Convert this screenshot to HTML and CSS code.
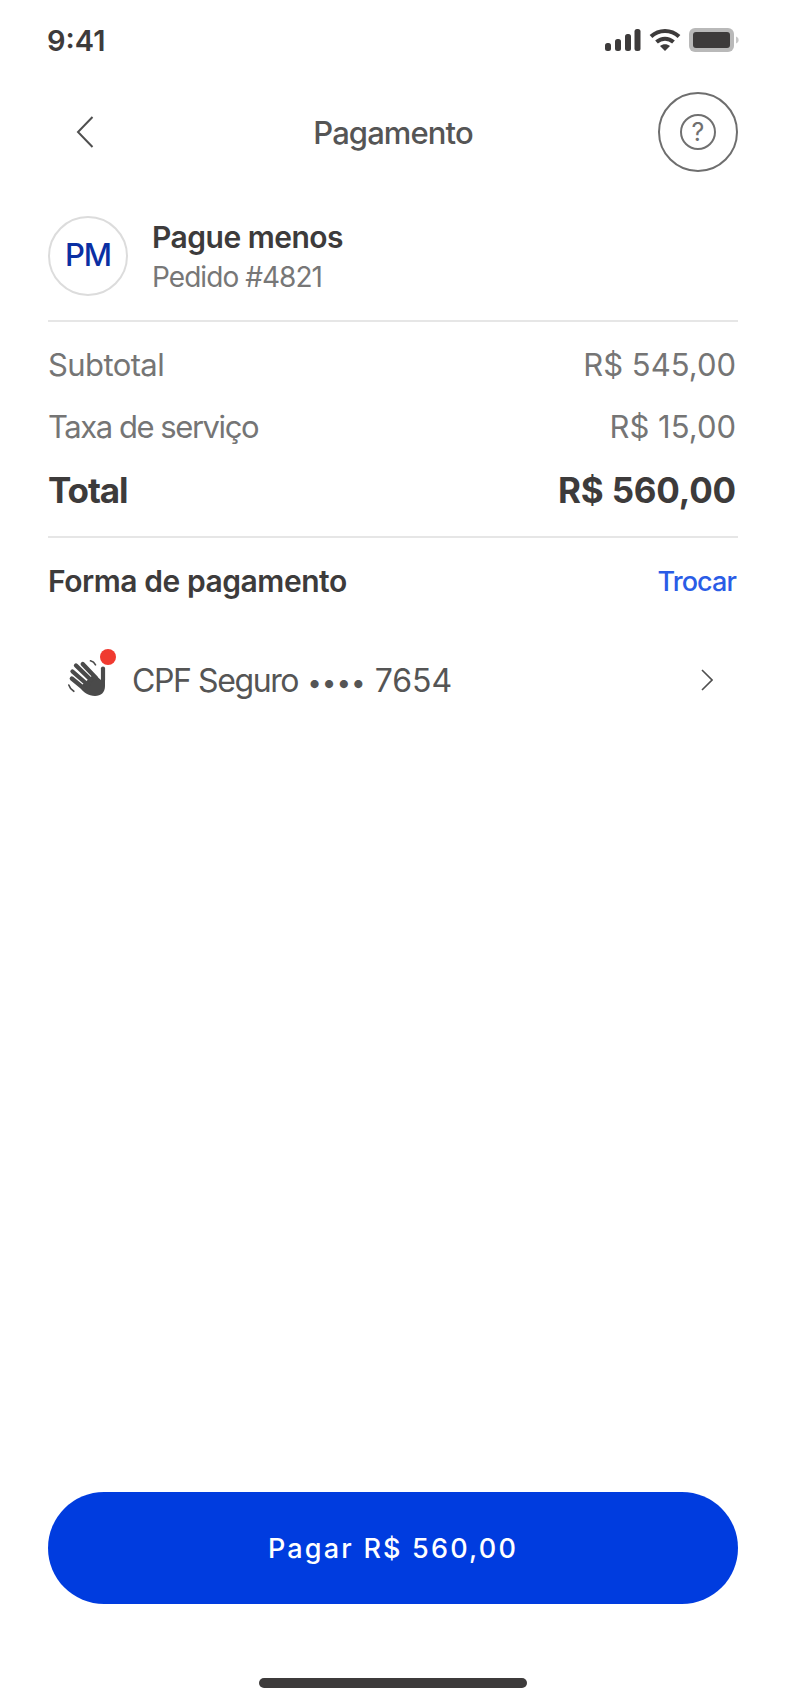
FILE: index.html
```html
<!DOCTYPE html>
<html lang="pt-BR">
  <head>
    <meta charset="UTF-8" />
    <title>Pagamento</title>
    <link rel="stylesheet" href="styles.css">
  </head>
  <body>
    <div class="screen">
      <div class="status-bar">
        <span class="clock">9:41</span>
        <div class="status-icons">
          <svg width="36" height="22" viewBox="0 0 36 22" fill="#3d3b3b">
            <rect x="0" y="14" width="6" height="8" rx="2.5" />
            <rect x="10" y="10" width="6" height="12" rx="2.5" />
            <rect x="20" y="5" width="6" height="17" rx="2.5" />
            <rect x="29.500" y="0" width="6" height="22" rx="2.500" />
          </svg>
          <svg width="32" height="24" viewBox="0 0 32 24" fill="none" stroke="#3d3b3b" stroke-width="4">
            <path d="M2 8.500C10 1 22 1 30 8.500" />
            <path d="M7.500 14C12.500 9.500 19.500 9.500 24.500 14" />
            <path d="M16 23l-5-5c3-2.200 7-2.200 10 0z" fill="#3d3b3b" stroke="none" />
          </svg>
          <svg width="50" height="24" viewBox="0 0 50 24">
            <rect x="0" y="0" width="45" height="24" rx="6" fill="#b9b9b9" />
            <rect x="4" y="4" width="37" height="16" rx="3" fill="#3d3b3b" />
            <path d="M47 8.500c2 .8 2.600 2 2.600 3.500s-.6 2.700-2.600 3.500z" fill="#c9c9c9" />
          </svg>
        </div>
      </div>

      <header class="nav">
        <button class="back" aria-label="Voltar">
          <svg width="18" height="32" viewBox="0 0 18 32" fill="none" stroke="#4f4f4f" stroke-width="2">
            <path d="M16.500 1L2 16l14.500 15" />
          </svg>
        </button>
        <h1 class="nav-title">Pagamento</h1>
        <button class="help" aria-label="Ajuda">
          <span class="help-inner">?</span>
        </button>
      </header>

      <section class="merchant">
        <div class="avatar">PM</div>
        <div class="merchant-text">
          <div class="merchant-name">Pague menos</div>
          <div class="merchant-order">Pedido #4821</div>
        </div>
      </section>

      <section class="summary">
        <div class="row"><span class="label-subtotal">Subtotal</span><span>R$ 545,00</span></div>
        <div class="row"><span class="label-fee">Taxa de serviço</span><span>R$ 15,00</span></div>
        <div class="row total"><span class="label-total">Total</span><span>R$ 560,00</span></div>
      </section>

      <section class="method">
        <div class="method-head">
          <h2>Forma de pagamento</h2>
          <a class="swap">Trocar</a>
        </div>
        <div class="method-row">
          <div class="method-icon">
            <svg width="40" height="40" viewBox="0 0 40 40" fill="none" stroke="#4a4a4a">
              <path d="M12 27L26 14l7 6V12h4v14c0 6.500-4 10-10 10-6.500 0-12-3.500-15-9z" fill="#4a4a4a" stroke="none" />
              <path d="M35 8.500V20" stroke-width="4.200" stroke-linecap="round" />
              <g stroke-width="4.300" stroke-linecap="round">
                <path d="M14.700 4L28 18" />
                <path d="M8 5.500L23 20" />
                <path d="M4.500 11.500L20 25" />
                <path d="M3.800 18.500L16 28.500" />
              </g>
              <g stroke-width="1.600" stroke-linecap="round">
                <path d="M.8 25c.8 2.600 2.500 4.800 5 6.300" />
                <path d="M22.500 .8c2.300.6 4 2 5 4" />
              </g>
            </svg>
            <span class="dot"></span>
          </div>
          <span class="method-label"><span class="method-name">CPF Seguro</span> <span class="method-bullets">••••</span> 7654</span>
          <svg class="method-chevron" width="12" height="22" viewBox="0 0 12 22" fill="none" stroke="#4f4f4f" stroke-width="1.600">
            <path d="M1 1l10 10L1 21" />
          </svg>
        </div>
      </section>

      <button class="pay">Pagar R$ 560,00</button>
      <div class="home-bar"></div>
    </div>
  </body>
</html>
```

FILE: styles.css
```css
* {
  box-sizing: border-box;
}
body {
  margin: 0;
  background: #fff;
  font-family: Inter, 'Noto Sans', sans-serif;
}
button {
  font-family: inherit;
  border: none;
  background: none;
  padding: 0;
}
h1, h2 {
  margin: 0;
}
.screen {
  width: 786px;
  height: 1704px;
  padding: 0 48px 16px 48px;
  display: flex;
  flex-direction: column;
  overflow: hidden;
}
.status-bar {
  height: 40px;
  margin-top: 20px;
  margin-right: -1px;
  display: flex;
  align-items: center;
  justify-content: space-between;
}
.clock {
  font-size: 29px;
  font-weight: 600;
  color: #3d3b3b;
  margin-left: -1px;
}
.status-icons {
  display: flex;
  align-items: center;
  gap: 8px;
}
.nav {
  margin-top: 32px;
  height: 80px;
  display: grid;
  grid-template-columns: 1fr auto 1fr;
  align-items: center;
}
.back {
  margin-left: 28px;
  display: flex;
}
.nav-title {
  padding-top: 1px;
  font-size: 31px;
  font-weight: 500;
  letter-spacing: -0.9px;
  color: #555;
}
.help {
  width: 80px;
  height: 80px;
  justify-self: end;
  border: 2px solid #6e6e6e;
  border-radius: 50%;
  display: flex;
  align-items: center;
  justify-content: center;
}
.help-inner {
  width: 36px;
  height: 36px;
  border: 2px solid #707070;
  border-radius: 50%;
  font-size: 25px;
  font-weight: 400;
  line-height: 32px;
  color: #707070;
  text-align: center;
}
.merchant {
  margin-top: 44px;
  padding-bottom: 24px;
  border-bottom: 2px solid #e6e6e6;
  display: flex;
  align-items: center;
  gap: 24px;
}
.avatar {
  width: 80px;
  height: 80px;
  padding-bottom: 3px;
  border: 2px solid #dcdcdc;
  border-radius: 50%;
  display: flex;
  align-items: center;
  justify-content: center;
  font-size: 31px;
  font-weight: 500;
  letter-spacing: -1px;
  color: #0a2fa3;
}
.merchant-text {
  margin: 1px 0 -1px;
}
.merchant-name {
  font-size: 30px;
  font-weight: 600;
  line-height: 40px;
  letter-spacing: -0.5px;
  color: #3d3b3b;
}
.merchant-order {
  font-size: 28px;
  line-height: 40px;
  letter-spacing: -0.95px;
  color: #777;
}
.summary {
  padding: 21px 2px 23px 0;
  border-bottom: 2px solid #e6e6e6;
}
.row {
  height: 42px;
  margin-bottom: 20px;
  display: flex;
  align-items: center;
  justify-content: space-between;
  font-size: 31px;
  color: #757575;
}
.label-subtotal {
  letter-spacing: -0.6px;
}
.label-fee {
  letter-spacing: -1.45px;
}
.total {
  height: 46px;
  margin: 0;
  font-size: 35px;
  font-weight: 700;
  letter-spacing: -0.2px;
  color: #3d3b3b;
}
.label-total {
  letter-spacing: -1.1px;
}
.method-head {
  margin-top: 25px;
  padding-right: 2px;
  display: flex;
  align-items: center;
  justify-content: space-between;
}
.method-head h2 {
  font-size: 30px;
  font-weight: 600;
  letter-spacing: -0.45px;
  color: #3d3b3b;
}
.swap {
  font-size: 27px;
  font-weight: 500;
  letter-spacing: -0.9px;
  color: #2a5ce6;
}
.method-row {
  margin-top: 61px;
  display: flex;
  align-items: center;
}
.method-icon {
  width: 40px;
  height: 40px;
  margin-left: 20px;
  position: relative;
}
.dot {
  position: absolute;
  top: -11px;
  left: 32px;
  width: 16px;
  height: 16px;
  border-radius: 50%;
  background: #f03a30;
}
.method-label {
  margin-left: 24px;
  font-size: 32px;
  color: #555;
}
.method-name {
  letter-spacing: -1.4px;
}
.method-bullets {
  font-size: 26px;
}
.method-chevron {
  margin-left: auto;
  margin-right: 25px;
}
.pay {
  margin-top: auto;
  height: 112px;
  flex: none;
  border-radius: 56px;
  background: #003cdf;
  color: #fff;
  font-size: 27px;
  font-weight: 500;
  letter-spacing: 2.2px;
}
.home-bar {
  width: 268px;
  height: 10px;
  margin: 74px auto 0;
  flex: none;
  border-radius: 5px;
  background: #3d3b3b;
}
```
